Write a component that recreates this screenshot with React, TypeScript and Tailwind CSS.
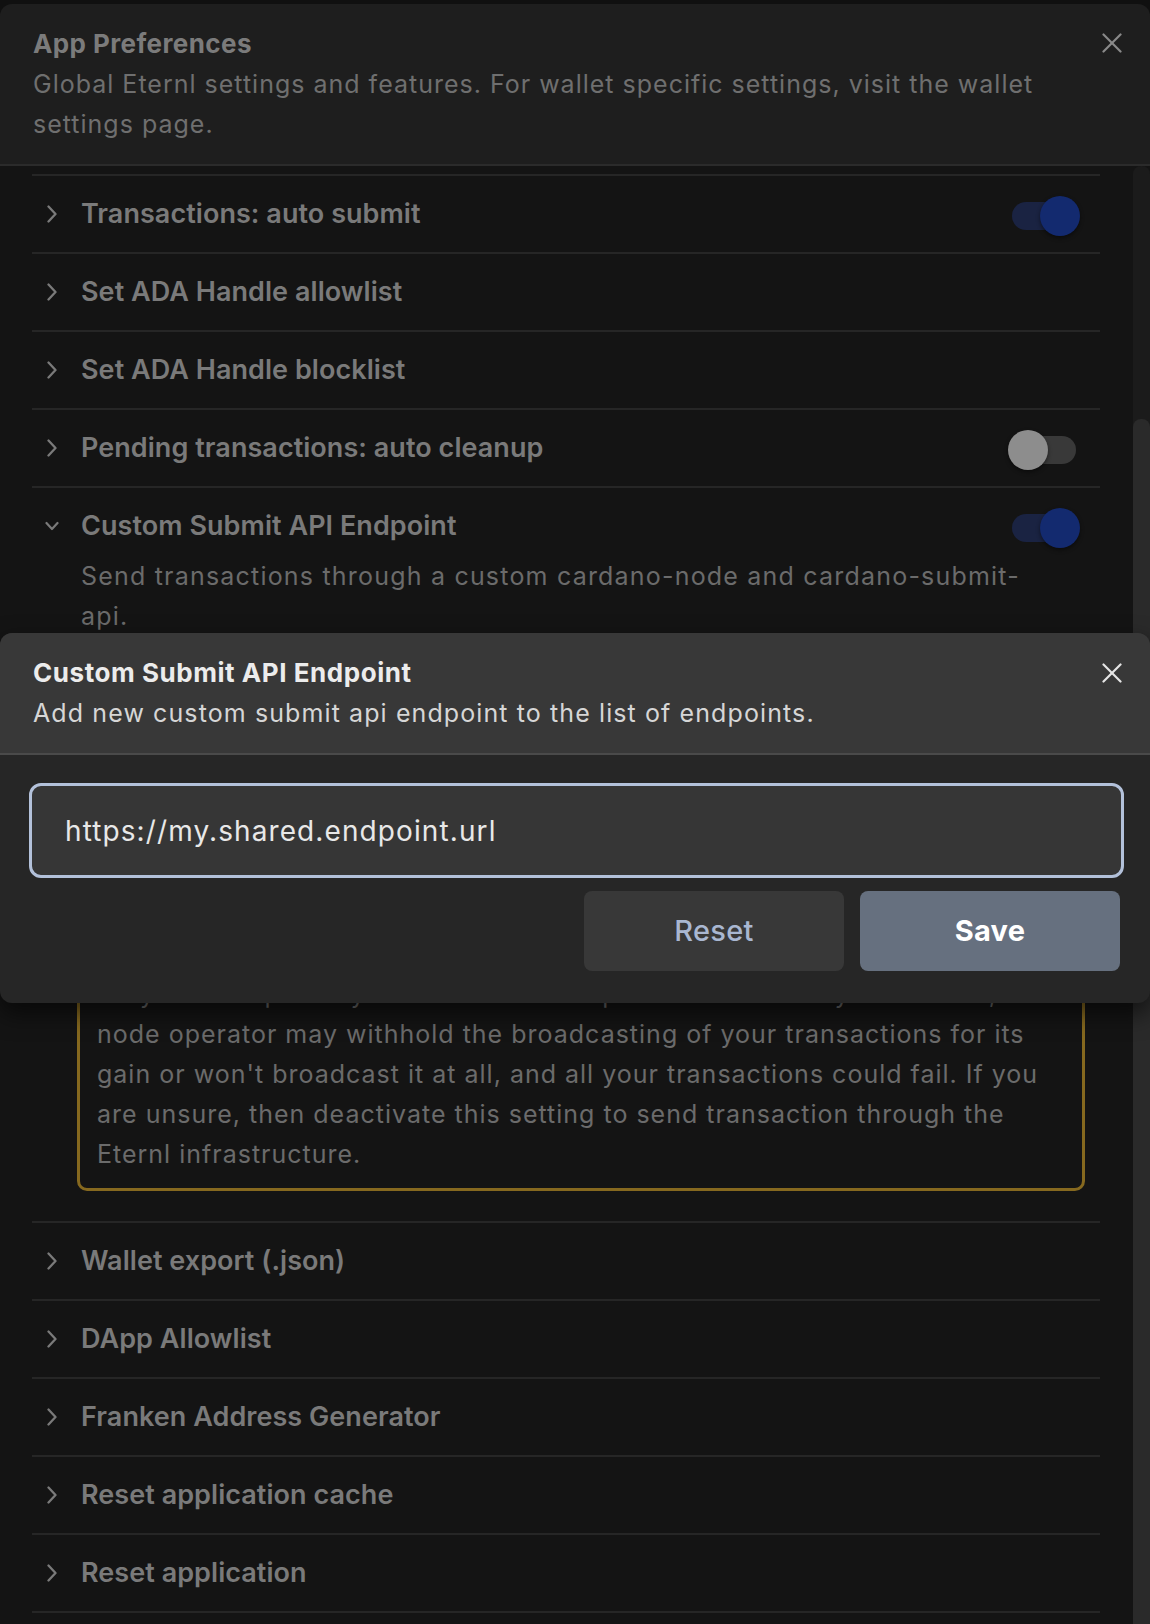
import React from "react";

const Chevron = ({ down = false }: { down?: boolean }) =>
  down ? (
    <svg width="14" height="10" viewBox="0 0 14 10" className="ml-[13px]" fill="none">
      <polyline points="1.5,2 7,8 12.5,2" stroke="#7a7a7a" strokeWidth="2.2" strokeLinecap="round" strokeLinejoin="round" />
    </svg>
  ) : (
    <svg width="12" height="18" viewBox="0 0 12 18" className="ml-[14px]" fill="none">
      <polyline points="2.5,1.5 9.5,9 2.5,16.5" stroke="#7a7a7a" strokeWidth="2.3" strokeLinecap="round" strokeLinejoin="round" />
    </svg>
  );

const Toggle = ({ on }: { on: boolean }) => (
  <div className="relative w-[72px] h-[40px] mr-[20px] shrink-0 translate-y-[2px]">
    <div className={`absolute left-[4px] top-[6px] w-[64px] h-[28px] rounded-full ${on ? "bg-[#1a2342]" : "bg-[#393939]"}`} />
    <div
      className={`absolute top-0 w-[40px] h-[40px] rounded-full shadow-[0_2px_4px_rgba(0,0,0,0.45)] ${
        on ? "left-[32px] bg-[#132a6f]" : "left-0 bg-[#8d8d8d]"
      }`}
    />
  </div>
);

const Row = ({ title, toggle }: { title: string; toggle?: boolean }) => (
  <div className="border-t-2 border-[#262626]">
    <div className="flex items-center py-[18px]">
      <div className="w-[49px] flex items-center shrink-0">
        <Chevron />
      </div>
      <div className="flex-1 text-[27px] leading-[40px] font-semibold tracking-[0.05px] text-[#7a7a7a]">{title}</div>
      {toggle !== undefined && <Toggle on={toggle} />}
    </div>
  </div>
);

const XIcon = ({ color }: { color: string }) => (
  <svg width="20" height="20" viewBox="0 0 20 20" fill="none">
    <line x1="1.5" y1="1.5" x2="18.5" y2="18.5" stroke={color} strokeWidth="2.2" strokeLinecap="round" />
    <line x1="18.5" y1="1.5" x2="1.5" y2="18.5" stroke={color} strokeWidth="2.2" strokeLinecap="round" />
  </svg>
);

const L = ({ children }: { children: React.ReactNode }) => <span className="block whitespace-nowrap">{children}</span>;

export default function App() {
  return (
    <div className="relative w-[1150px] h-[1624px] overflow-hidden bg-[#101010] font-['Inter','Liberation_Sans',sans-serif]">
      <div className="mt-1 h-[1620px] rounded-t-[12px] bg-[#1e1e1e] flex flex-col overflow-hidden">
        <header className="relative shrink-0 px-[33px] py-5 border-b-2 border-[#2b2b2b]">
          <h1 className="text-[26px] leading-[40px] font-bold tracking-[0.4px] text-[#7b7b7b]">App Preferences</h1>
          <p className="text-[25px] leading-[40px] tracking-[1px] text-[#6f6f6f]">
            <L>Global Eternl settings and features. For wallet specific settings, visit the wallet</L>
            <L>settings page.</L>
          </p>
          <div className="absolute top-[29px] right-[28px]">
            <XIcon color="#8a8a8a" />
          </div>
        </header>

        <div className="flex flex-1 min-h-0 bg-[#141414]">
          <div className="flex-1 pl-[32px] pr-[33px] pt-[8px]">
            <Row title="Transactions: auto submit" toggle={true} />
            <Row title="Set ADA Handle allowlist" />
            <Row title="Set ADA Handle blocklist" />
            <Row title="Pending transactions: auto cleanup" toggle={false} />

            <div className="border-t-2 border-[#262626]">
              <div className="flex items-center pt-[18px]">
                <div className="w-[49px] flex items-center shrink-0">
                  <Chevron down />
                </div>
                <div className="flex-1 text-[27px] leading-[40px] font-semibold tracking-[0.05px] text-[#7a7a7a]">
                  Custom Submit API Endpoint
                </div>
                <Toggle on={true} />
              </div>
              <p className="mt-[10px] ml-[49px] text-[25px] leading-[40px] tracking-[1.2px] text-[#6b6b6b]">
                <L>Send transactions through a custom cardano-node and cardano-submit-</L>
                <L>api.</L>
              </p>
              <div className="h-[321px]" />
              <div className="ml-[45px] mr-[15px] mb-[30px] border-[3px] border-[#86691f] rounded-[10px] px-[17px] py-[14px] text-[25px] leading-[40px] tracking-[1px] text-[#6b6b6b]">
                <L>Only use endpoints you trust. If the endpoint is not under your control, the</L>
                <L>node operator may withhold the broadcasting of your transactions for its</L>
                <L>gain or won't broadcast it at all, and all your transactions could fail. If you</L>
                <L>are unsure, then deactivate this setting to send transaction through the</L>
                <L>Eternl infrastructure.</L>
              </div>
            </div>

            <Row title="Wallet export (.json)" />
            <Row title="DApp Allowlist" />
            <Row title="Franken Address Generator" />
            <Row title="Reset application cache" />
            <Row title="Reset application" />
            <div className="border-t-2 border-[#262626]" />
          </div>
          <div className="w-[17px] shrink-0 bg-[#1b1b1b] rounded-t-[8px] flex flex-col">
            <div className="mt-[253px] flex-1 bg-[#2a2a2a] rounded-t-[8px]" />
          </div>
        </div>
      </div>

      <div className="absolute top-[633px] left-0 w-[1150px] h-[370px] rounded-[12px] overflow-hidden bg-[#262626] shadow-[0_10px_24px_rgba(0,0,0,0.6)]">
        <div className="relative bg-[#383838] px-[33px] py-5 border-b-2 border-[#4a4a4a]">
          <h2 className="text-[26px] leading-[40px] font-bold tracking-[0.55px] text-[#ececec]">Custom Submit API Endpoint</h2>
          <p className="text-[25px] leading-[40px] tracking-[1.1px] text-[#d6d6d6]">
            Add new custom submit api endpoint to the list of endpoints.
          </p>
          <div className="absolute top-[30px] right-[28px]">
            <XIcon color="#e6e6e6" />
          </div>
        </div>
        <div className="mt-[28px] ml-[29px] mr-[26px] h-[95px] rounded-[12px] border-[3px] border-[#b3c1da] bg-[#363636] flex items-center pl-[33px] text-[28px] tracking-[1.1px] text-[#e8e8e8]">
          https://my.shared.endpoint.url
        </div>
        <div className="mt-[13px] mr-[30px] flex justify-end gap-4">
          <button className="w-[260px] h-[80px] rounded-[8px] bg-[#383838] text-[29px] font-medium tracking-[0.3px] text-[#a9b7d1]">
            Reset
          </button>
          <button className="w-[260px] h-[80px] rounded-[8px] bg-[#66707f] text-[29px] font-bold tracking-[0.3px] text-white">
            Save
          </button>
        </div>
      </div>
    </div>
  );
}
